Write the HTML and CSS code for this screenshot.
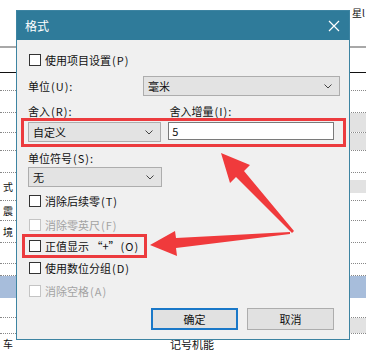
FILE: index.html
```html
<!DOCTYPE html>
<html lang="zh-CN">
<head>
  <meta charset="UTF-8" />
  <title>格式</title>
  <link rel="stylesheet" href="styles.css">
</head>
<body>

<!-- sheet behind the dialog -->
<div class="sheet">
  <div class="row row-top"><span class="peek">星l</span></div>
  <div class="row row-head"></div>
  <div class="row row-rule"></div>
  <div class="row h18"></div>
  <div class="row h22"></div>
  <div class="row h20"><span class="cell-right grey"></span></div>
  <div class="row h18"><span class="cell-right grey"></span></div>
  <div class="row h22"></div>
  <div class="row h28"><span class="side">式</span><span class="cell-right grey short"></span></div>
  <div class="row h20"><span class="side">震</span></div>
  <div class="row h22"><span class="side">境</span></div>
  <div class="row h21"></div>
  <div class="row h12"></div>
  <div class="row blue"></div>
  <div class="row h20"></div>
  <div class="row h16"><span class="cell-right grey"></span></div>
  <div class="row row-foot"><span class="side">车</span><span class="foot-text">记号机能</span></div>
</div>

<!-- dialog -->
<div class="dialog">
  <div class="titlebar">
    <span class="title">格式</span>
    <svg class="close" width="12" height="12" viewBox="0 0 12 12">
      <path d="M1 1 L11 11 M11 1 L1 11" stroke="#fff" stroke-width="1.2" fill="none"/>
    </svg>
  </div>

  <div class="dialog-body">
    <div class="check first"><span class="box"></span>使用项目设置<span class="key">(P)</span></div>

    <div class="unit-row">
      <span class="label">单位<span class="key">(U):</span></span>
      <div class="select unit-select">毫米<svg class="chev" width="8" height="5" viewBox="0 0 8 5"><path d="M0.5 0.5 L4 4 L7.5 0.5" stroke="#444" fill="none"/></svg></div>
    </div>

    <div class="round-labels">
      <span class="label">舍入<span class="key">(R):</span></span>
      <span class="label step-label">舍入增量<span class="key">(I):</span></span>
    </div>

    <div class="round-row">
      <div class="select round-select">自定义<svg class="chev" width="8" height="5" viewBox="0 0 8 5"><path d="M0.5 0.5 L4 4 L7.5 0.5" stroke="#444" fill="none"/></svg></div>
      <div class="input">5</div>
    </div>

    <div class="label symbol-label">单位符号<span class="key">(S):</span></div>
    <div class="select round-select symbol-select">无<svg class="chev" width="8" height="5" viewBox="0 0 8 5"><path d="M0.5 0.5 L4 4 L7.5 0.5" stroke="#444" fill="none"/></svg></div>

    <div class="check trail"><span class="box"></span>消除后续零<span class="key">(T)</span></div>
    <div class="check off"><span class="box"></span>消除零英尺<span class="key">(F)</span></div>
    <div class="check plus"><span class="box"></span>正值显示 “+”<span class="key">(O)</span></div>
    <div class="check group"><span class="box"></span>使用数位分组<span class="key">(D)</span></div>
    <div class="check off space"><span class="box"></span>消除空格<span class="key">(A)</span></div>

    <div class="buttons">
      <button class="btn primary">确定</button>
      <button class="btn">取消</button>
    </div>
  </div>
</div>

<!-- red marks drawn over the screenshot -->
<svg class="marks" width="366" height="359" viewBox="0 0 366 359">
  <rect x="22.5" y="119.5" width="322" height="26" fill="none" stroke="#ec3b3e" stroke-width="3"/>
  <rect x="23.5" y="235.5" width="122" height="21" fill="none" stroke="#ec3b3e" stroke-width="3"/>
  <polygon points="221,153 250,165 244,171 294,231 292,233 236,177 230,183" fill="#f03a3c"/>
  <polygon points="150,245 175,231 176,238 290,232 290,234 176,248 177,256" fill="#f03a3c"/>
</svg>

</body>
</html>
```

FILE: styles.css
```css
body {
  margin: 0;
  width: 366px;
  height: 359px;
  overflow: hidden;
  position: relative;
  background-color: #fff;
  font-family: "Noto Sans CJK SC", "Microsoft YaHei", sans-serif;
  font-size: 11px;
  line-height: 14px;
  color: #111;
}

/* background sheet */
.sheet {
  display: flex;
  flex-direction: column;
}

.row {
  display: flex;
  align-items: center;
  border-bottom: 1px dotted #888;
  flex-shrink: 0;
  position: relative;
}

.row-top {
  height: 46px;
  border-bottom: 2px solid #a8a8a8;
  align-items: flex-start;
  justify-content: flex-end;
}

.peek {
  margin-top: 6px;
  width: 14px;
  overflow: hidden;
  font-size: 10px;
}

.row-head {
  height: 24px;
  border-bottom: 1px solid #111;
}

.row-rule { height: 0; border-bottom: none; }
.h12 { height: 11px; }
.h16 { height: 15px; }
.h18 { height: 17px; }
.h20 { height: 19px; }
.h21 { height: 20px; }
.h22 { height: 21px; }
.h28 { height: 27px; }

.blue {
  height: 22px;
  background-color: #a7bddb;
  border-bottom: none;
}

.cell-right {
  margin-left: auto;
  width: 16px;
  height: 100%;
}

.cell-right.grey { background-color: #e2e2e2; }
.cell-right.short { height: 13px; }

.side {
  width: 12px;
  overflow: hidden;
  padding-left: 3px;
  font-size: 10px;
}

.row-foot {
  height: 20px;
  border-bottom: none;
}

.foot-text {
  margin-left: 155px;
  font-size: 11px;
}

/* dialog window */
.dialog {
  position: absolute;
  left: 16px;
  top: 10px;
  width: 334px;
  height: 330px;
  box-sizing: border-box;
  border: 1px solid #3d84a2;
  background-color: #f0f0f0;
  display: flex;
  flex-direction: column;
}

.titlebar {
  height: 29px;
  background-color: #2f7b9a;
  display: flex;
  align-items: center;
  justify-content: space-between;
  padding: 0 8px 0 8px;
  color: #fff;
  font-size: 12px;
}

.close {
  margin-right: 1px;
}

.dialog-body {
  display: flex;
  flex-direction: column;
  padding: 0 15px 0 11px;
}

.key {
  letter-spacing: 1px;
  margin-left: 1px;
}

.check {
  display: flex;
  align-items: center;
  height: 16px;
  padding-left: 1px;
}

.box {
  width: 10px;
  height: 10px;
  border: 1px solid #333;
  background-color: #fff;
  margin-right: 4px;
}

.check.off { color: #a3a3a3; }
.check.off .box { border-color: #c4c4c4; }

.first { margin-top: 12px; }
.trail { margin-top: 6px; }
.off { margin-top: 8px; }
.plus { margin-top: 5px; }
.group { margin-top: 6px; }
.space { margin-top: 7px; }

.unit-row {
  display: flex;
  align-items: center;
  justify-content: space-between;
  margin-top: 8px;
  margin-right: -6px;
}

.select {
  display: flex;
  align-items: center;
  justify-content: space-between;
  box-sizing: border-box;
  height: 20px;
  padding: 0 7px 0 4px;
  background-color: #e3e3e3;
  border: 1px solid #adadad;
}

.unit-select { width: 197px; }

.round-labels {
  display: flex;
  margin-top: 8px;
}

.step-label { margin-left: 97px; }

.round-row {
  display: flex;
  gap: 7px;
  margin-top: 4px;
}

.round-select { width: 134px; }

.input {
  box-sizing: border-box;
  width: 167px;
  height: 18px;
  padding: 0 3px;
  background-color: #fff;
  border: 1px solid #7a7a7a;
  line-height: 16px;
}

.symbol-label { margin-top: 9px; }
.symbol-select { margin-top: 2px; }

.buttons {
  display: flex;
  justify-content: flex-end;
  gap: 9px;
  margin-top: 9px;
}

.btn {
  box-sizing: border-box;
  width: 87px;
  height: 22px;
  background-color: #e1e1e1;
  border: 1px solid #adadad;
  font-family: inherit;
  font-size: 11px;
  color: #111;
  padding: 0;
}

.btn.primary {
  border: 2px solid #1a78c8;
}

/* annotation layer */
.marks {
  position: absolute;
  left: 0;
  top: 0;
  pointer-events: none;
}
```
